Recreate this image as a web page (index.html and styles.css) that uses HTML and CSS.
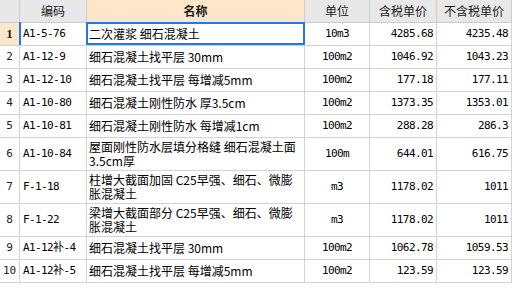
FILE: index.html
```html
<!DOCTYPE html>
<html lang="zh-CN">
<head>
<meta charset="utf-8">
<title>定额列表</title>
<link rel="stylesheet" href="styles.css">
</head>
<body>
<div class="sheet">
  <div class="row head">
    <div class="cell corner"></div>
    <div class="cell hc">编码</div>
    <div class="cell hc hl">名称</div>
    <div class="cell hc">单位</div>
    <div class="cell hc">含税单价</div>
    <div class="cell hc">不含税单价</div>
  </div>
  <div class="row one current">
    <div class="cell num">1</div>
    <div class="cell code">A1-5-76</div>
    <div class="cell name">二次灌浆 细石混凝土</div>
    <div class="cell unit">10m3</div>
    <div class="cell price">4285.68</div>
    <div class="cell price">4235.48</div>
  </div>
  <div class="row one">
    <div class="cell num">2</div>
    <div class="cell code">A1-12-9</div>
    <div class="cell name">细石混凝土找平层 30mm</div>
    <div class="cell unit">100m2</div>
    <div class="cell price">1046.92</div>
    <div class="cell price">1043.23</div>
  </div>
  <div class="row one">
    <div class="cell num">3</div>
    <div class="cell code">A1-12-10</div>
    <div class="cell name">细石混凝土找平层 每增减5mm</div>
    <div class="cell unit">100m2</div>
    <div class="cell price">177.18</div>
    <div class="cell price">177.11</div>
  </div>
  <div class="row one">
    <div class="cell num">4</div>
    <div class="cell code">A1-10-80</div>
    <div class="cell name">细石混凝土刚性防水 厚3.5cm</div>
    <div class="cell unit">100m2</div>
    <div class="cell price">1373.35</div>
    <div class="cell price">1353.01</div>
  </div>
  <div class="row one">
    <div class="cell num">5</div>
    <div class="cell code">A1-10-81</div>
    <div class="cell name">细石混凝土刚性防水 每增减1cm</div>
    <div class="cell unit">100m2</div>
    <div class="cell price">288.28</div>
    <div class="cell price">286.3</div>
  </div>
  <div class="row two">
    <div class="cell num">6</div>
    <div class="cell code">A1-10-84</div>
    <div class="cell name">屋面刚性防水层填分格缝 细石混凝土面3.5cm厚</div>
    <div class="cell unit">100m</div>
    <div class="cell price">644.01</div>
    <div class="cell price">616.75</div>
  </div>
  <div class="row two">
    <div class="cell num">7</div>
    <div class="cell code">F-1-18</div>
    <div class="cell name">柱增大截面加固 C25早强、细石、微膨胀混凝土</div>
    <div class="cell unit">m3</div>
    <div class="cell price">1178.02</div>
    <div class="cell price">1011</div>
  </div>
  <div class="row two">
    <div class="cell num">8</div>
    <div class="cell code">F-1-22</div>
    <div class="cell name">梁增大截面部分 C25早强、细石、微膨胀混凝土</div>
    <div class="cell unit">m3</div>
    <div class="cell price">1178.02</div>
    <div class="cell price">1011</div>
  </div>
  <div class="row one">
    <div class="cell num">9</div>
    <div class="cell code">A1-12补-4</div>
    <div class="cell name">细石混凝土找平层 30mm</div>
    <div class="cell unit">100m2</div>
    <div class="cell price">1062.78</div>
    <div class="cell price">1059.53</div>
  </div>
  <div class="row one">
    <div class="cell num">10</div>
    <div class="cell code">A1-12补-5</div>
    <div class="cell name">细石混凝土找平层 每增减5mm</div>
    <div class="cell unit">100m2</div>
    <div class="cell price">123.59</div>
    <div class="cell price">123.59</div>
  </div>
</div>
</body>
</html>
```
FILE: styles.css
```css
html, body {
  margin: 0;
  padding: 0;
  background: #ffffff;
}

body {
  font-family: "Noto Sans CJK SC", "Noto Sans", sans-serif;
  font-size: 12px;
  color: #000000;
}

.sheet {
  width: 512px;
}

.row {
  display: grid;
  grid-template-columns: 20px 67px 218px 65px 67px 75px;
}

.row.head { height: 23px; }
.row.one { height: 23px; }
.row.two { height: 33px; }

.cell {
  box-sizing: border-box;
  display: flex;
  align-items: center;
  border-right: 1px solid #d4d4d4;
  border-bottom: 1px solid #d4d4d4;
  line-height: 14px;
  white-space: nowrap;
  position: relative;
}

.head .cell {
  background: #e8e8e8;
  color: #1a1a1a;
  justify-content: center;
  border-color: #cdcdcd;
  font-family: "Noto Sans CJK SC", sans-serif;
  letter-spacing: 0;
}

.head .cell.hl {
  background: #fee6ca;
  font-weight: 700;
}

.num {
  justify-content: center;
  font-family: "DejaVu Sans Mono", "Noto Sans CJK SC", monospace;
  font-size: 11px;
  color: #222;
}

.current .num {
  background: #fee6ca;
  font-family: "Liberation Serif", serif;
  font-weight: 700;
  font-size: 13px;
}

.code,
.unit,
.price {
  font-family: "DejaVu Sans Mono", "Noto Sans CJK SC", monospace;
  font-size: 11px;
  letter-spacing: -0.6px;
}

.code {
  padding-left: 3px;
}

.current .code::before {
  content: "";
  position: absolute;
  left: -1px;
  top: -1px;
  width: 2px;
  height: 23px;
  background: #1f7ae8;
}

.name {
  padding-left: 2px;
  padding-right: 7px;
  white-space: normal;
}

.current .name::after {
  content: "";
  position: absolute;
  left: -1px;
  top: -1px;
  width: 219px;
  height: 23px;
  box-sizing: border-box;
  border: 2px solid #1f7ae8;
}

.unit {
  justify-content: center;
}

.price {
  justify-content: flex-end;
  padding-right: 3px;
}
```
